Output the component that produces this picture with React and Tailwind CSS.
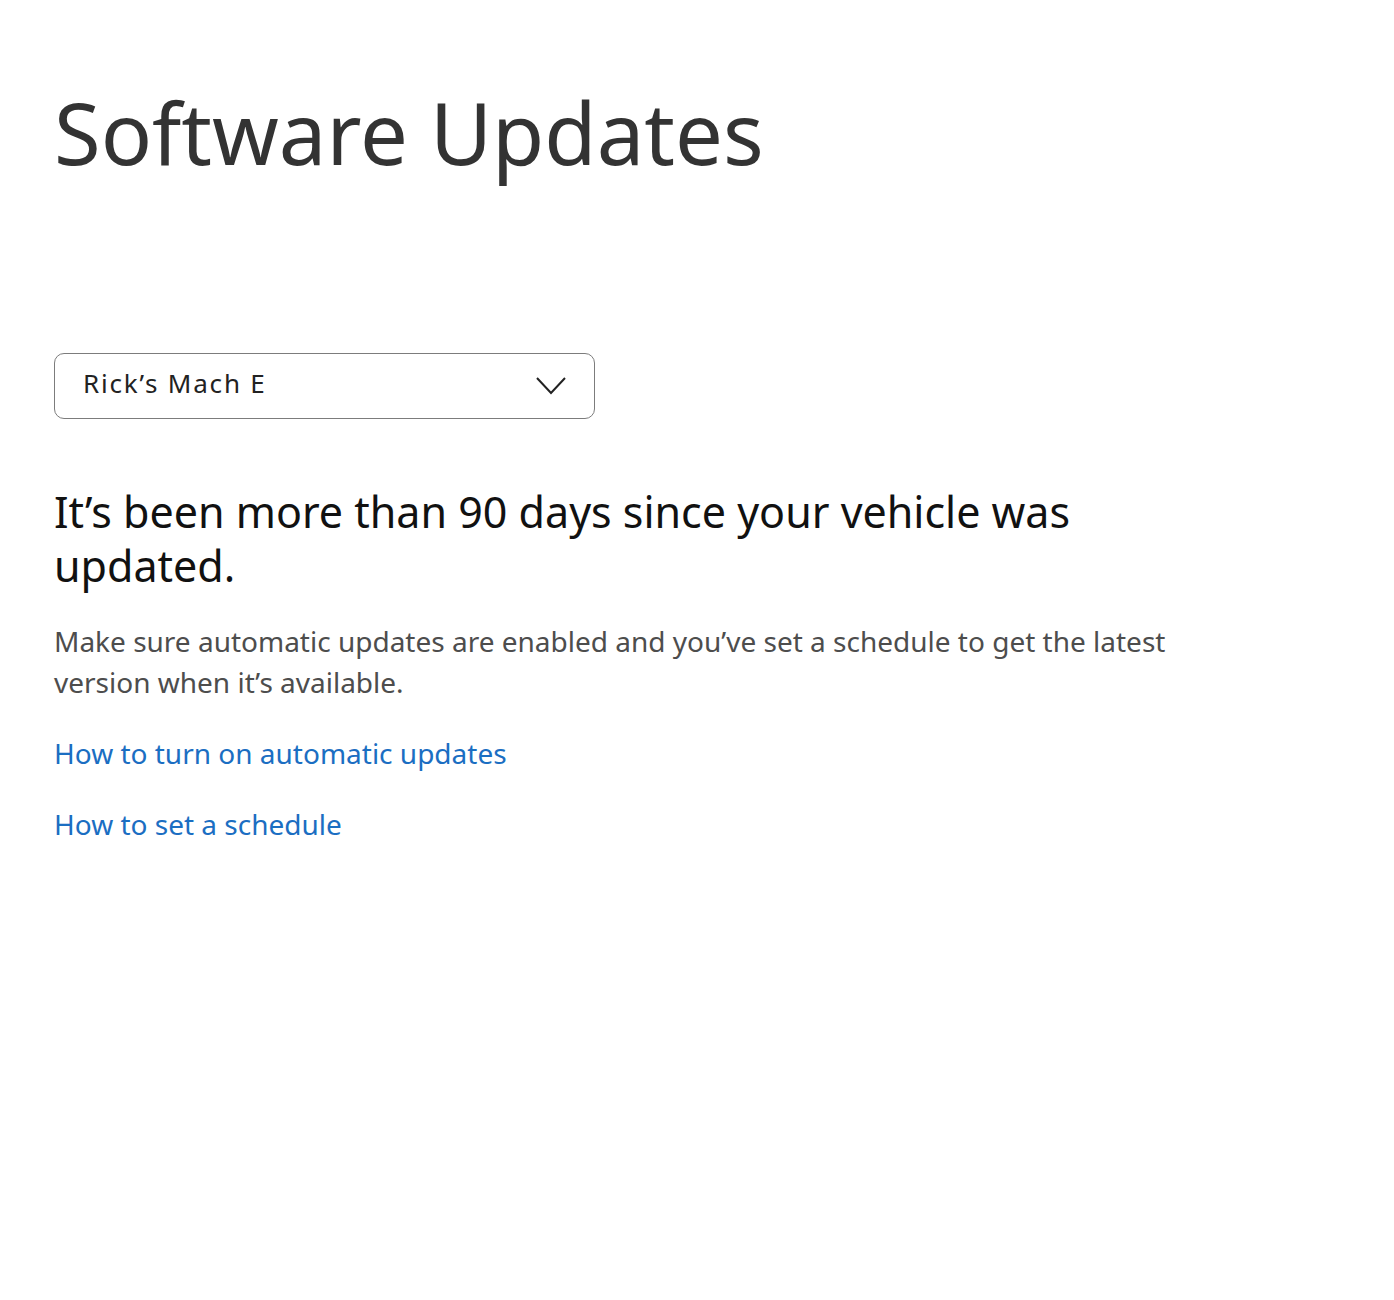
import React from "react";

export default function App() {
  return (
    <div className="min-h-[1300px] bg-white px-[54px] pt-[84px] text-[#333]" style={{ fontFamily: '"Noto Sans", "Open Sans", sans-serif' }}>
      <h1 className="text-[85px] leading-[96px] text-[#333] font-normal">Software Updates</h1>

      <button className="mt-[173px] flex h-[66px] w-[541px] items-center justify-between rounded-[10px] border border-[#7c7c7c] pl-[28px] pr-[28px] text-left">
        <span className="mb-[5px] text-[26px] tracking-[1.8px] text-[#222]">Rick’s Mach E</span>
        <svg width="30" height="18" viewBox="0 0 30 18" fill="none" stroke="#222" strokeWidth="2">
          <path d="M1 1l14 15L29 1" />
        </svg>
      </button>

      <h2 className="mt-[66px] max-w-[1100px] text-[43px] leading-[54px] text-[#111] font-normal">
        It’s been more than 90 days since your vehicle was updated.
      </h2>

      <p className="mt-[28px] max-w-[1150px] text-[28px] leading-[41px] text-[#4d4d4d]">
        Make sure automatic updates are enabled and you’ve set a schedule to get the latest version when it’s available.
      </p>

      <div className="mt-[30px] flex flex-col gap-[31px]">
        <a href="#" className="text-[28px] leading-[40px] text-[#1b6ec2]">How to turn on automatic updates</a>
        <a href="#" className="text-[28px] leading-[40px] text-[#1b6ec2]">How to set a schedule</a>
      </div>
    </div>
  );
}
